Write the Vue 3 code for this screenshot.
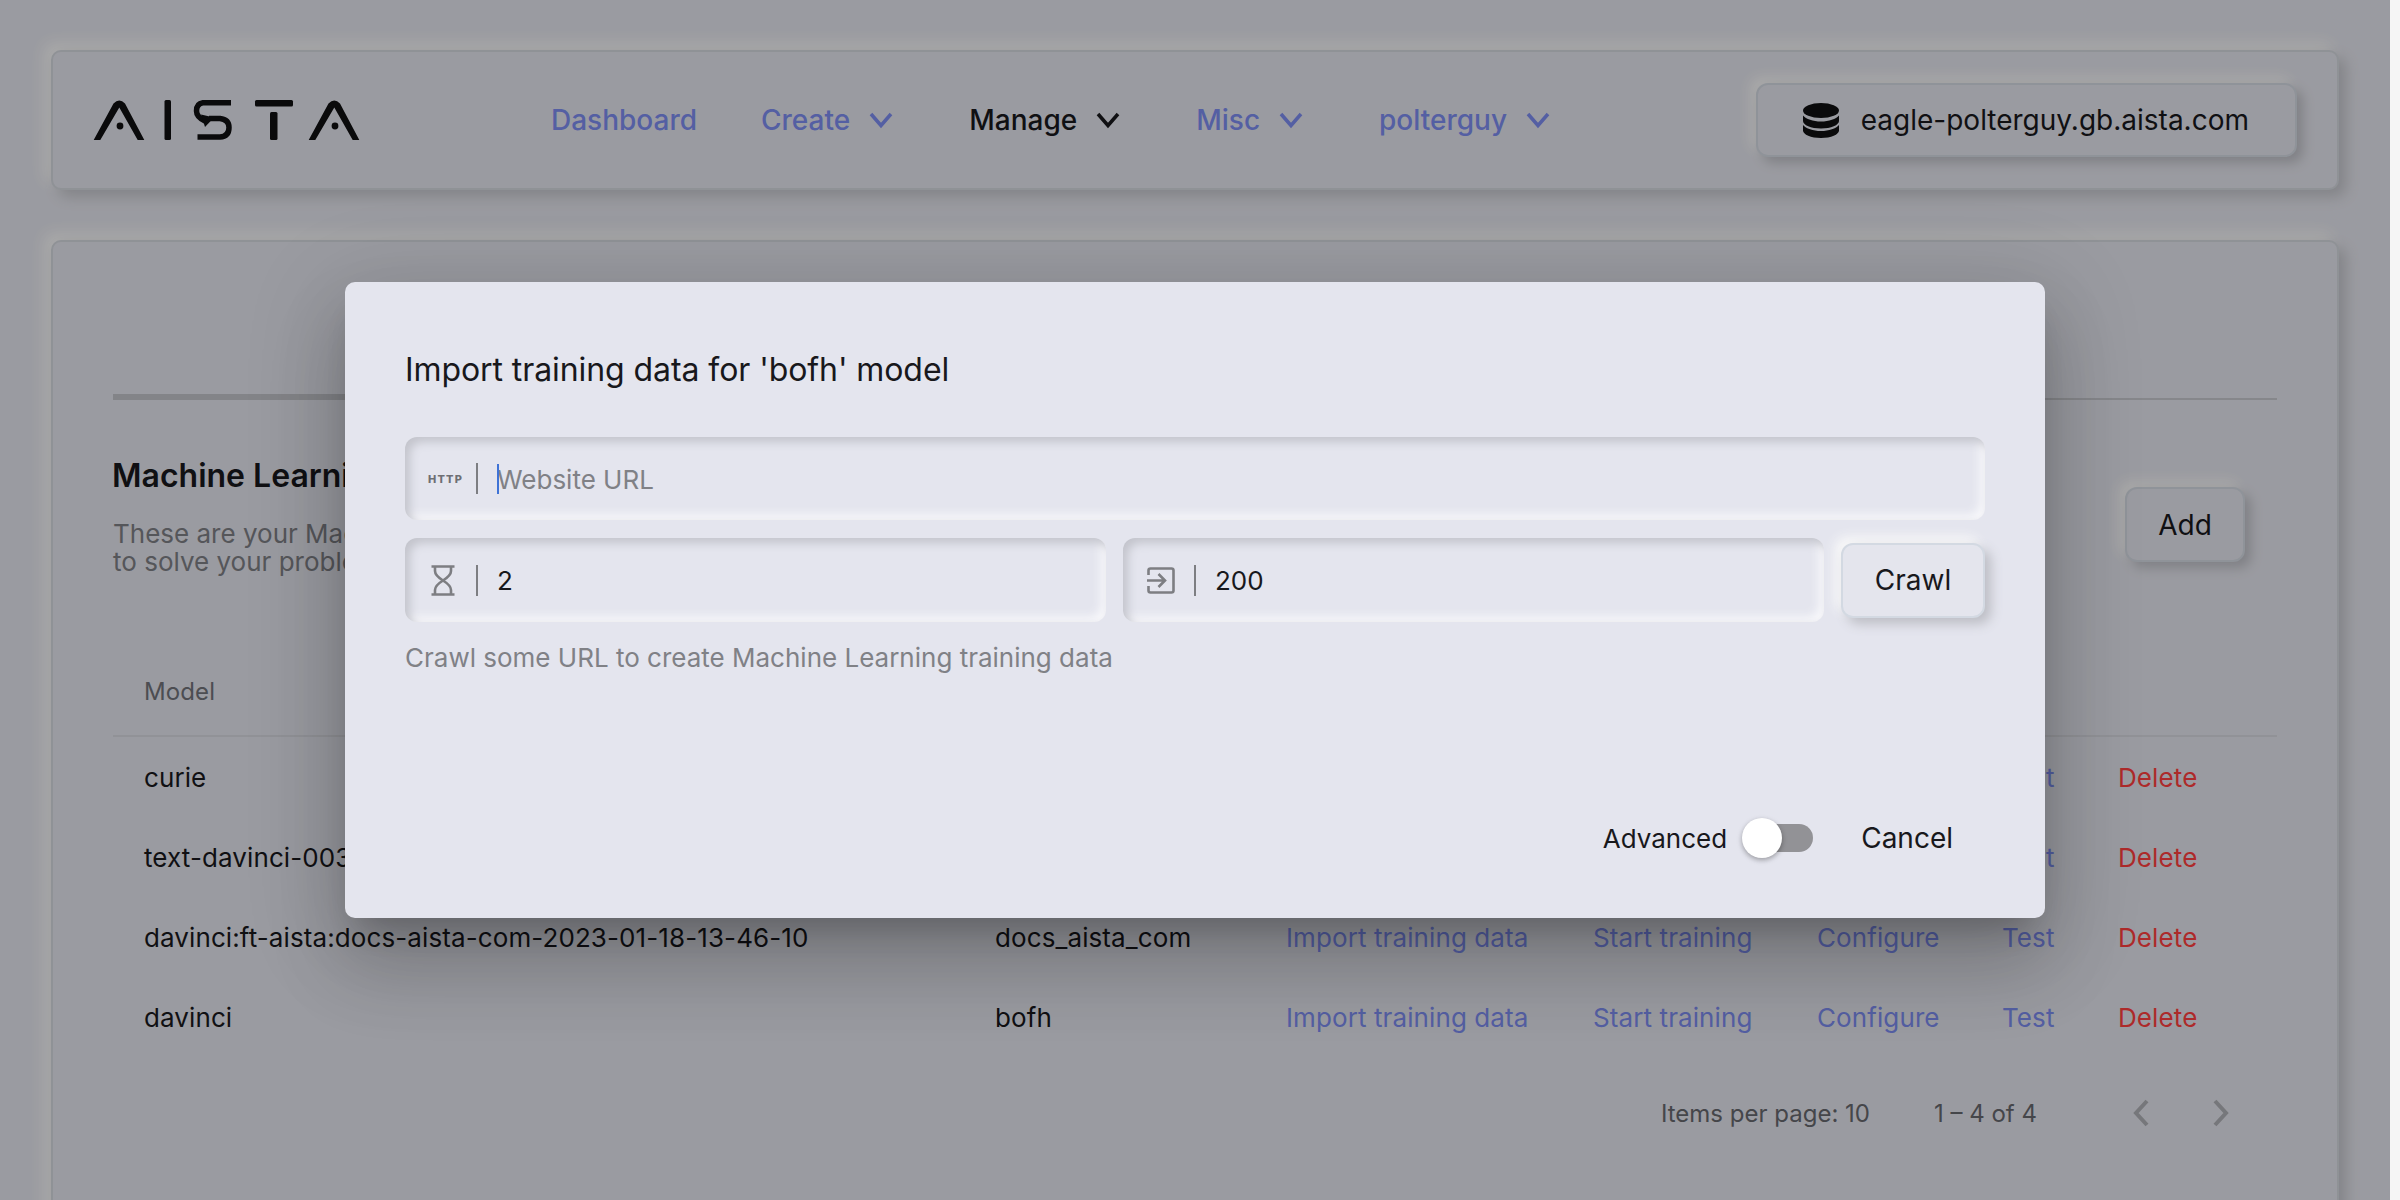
<template>
  <div class="root">
    <div class="page">
      <header class="card navbar">
        <!-- AISTA wordmark -->
        <svg class="logo" viewBox="0 0 267 40" role="img" aria-label="AISTA">
          <path d="M0.7 40 L20.5 3.5 Q26.3 -2.5 32 3.5 L51.3 40 H44.7 L26.3 7.5 L7.3 40 Z" />
          <circle cx="27" cy="26" r="3.4" />
          <rect x="71.5" y="0" width="6.5" height="40" rx="1.5" />
          <path class="logo-line" d="M138 2.7 H110 Q103.5 3.5 103.5 11 Q103.5 17 112 21" />
          <path d="M108 14.5 L121 17.5 L112 27 Z" />
          <path class="logo-line" d="M116 18.5 H127 Q136 19.5 136 27.5 Q136 36.5 127 37 H104.5" />
          <rect x="162" y="0" width="38" height="6.5" rx="1.5" />
          <rect x="177" y="12" width="7.5" height="28" rx="1.5" />
          <path d="M215.7 40 L235.5 3.5 Q241.3 -2.5 247 3.5 L266.3 40 H259.7 L241.3 7.5 L222.3 40 Z" />
          <circle cx="242" cy="26" r="3.4" />
        </svg>

        <nav class="nav">
          <a v-for="item in navItems" :key="item.label" class="nav-item" :class="{ active: item.active, drop: item.drop }">
            {{ item.label }}
            <svg v-if="item.drop" class="nav-chev" viewBox="0 0 32 32">
              <path d="M6 10 L16 21.5 L26 10" />
            </svg>
          </a>
        </nav>

        <button class="neu-btn server">
          <svg class="db-icon" viewBox="0 0 36 35">
            <ellipse cx="18" cy="7.5" rx="18" ry="7.5" />
            <path d="M0 12.5 v5.5 c0 4 8 7.5 18 7.5 s18 -3.5 18 -7.5 v-5.5 c-3 3.5 -10 6 -18 6 s-15 -2.500 -18 -6z" />
            <path d="M0 22 v5.500 c0 4 8 7.500 18 7.500 s18 -3.500 18 -7.500 V22 c-3 3.500 -10 6 -18 6 S3 25.500 0 22z" />
          </svg>
          eagle-polterguy.gb.aista.com
        </button>
      </header>

      <main class="card content">
        <div class="rule"><span class="rule-active"></span></div>

        <section class="section-head">
          <div>
            <h2 class="heading">Machine Learning models</h2>
            <p class="desc">These are your Machine Learning models, train them with your own data<br />to solve your problems</p>
          </div>
          <button class="neu-btn add">Add</button>
        </section>

        <div class="table">
          <div class="row head">
            <span>Model</span>
            <span>Name</span>
          </div>
          <div v-for="row in rows" :key="row.model" class="row">
            <span>{{ row.model }}</span>
            <span>{{ row.name }}</span>
            <a class="link">Import training data</a>
            <a class="link">Start training</a>
            <a class="link">Configure</a>
            <a class="link">Test</a>
            <a class="link danger">Delete</a>
          </div>
        </div>

        <div class="paginator">
          <span>Items per page: 10</span>
          <span class="range">1 – 4 of 4</span>
          <svg class="page-chev prev" viewBox="0 0 16 28"><path d="M14 2 L3 14 L14 26" /></svg>
          <svg class="page-chev" viewBox="0 0 16 28"><path d="M2 2 L13 14 L2 26" /></svg>
        </div>
      </main>
    </div>
    <div class="scrollbar"></div>

    <div class="overlay">
      <div class="modal">
        <h3 class="modal-title">Import training data for 'bofh' model</h3>

        <label class="field url-field">
          <span class="field-icon http">HTTP</span>
          <input placeholder="Website URL" />
        </label>

        <div class="field-row">
          <label class="field">
            <span class="field-icon">
              <svg class="hourglass" viewBox="0 0 24 31">
                <path d="M0.500 1.500 H23.500 M0.500 29.500 H23.500 M4 1.500 V6 Q4 10.500 12 15.500 Q20 10.500 20 6 V1.500 M4 29.500 V25 Q4 20.500 12 15.500 Q20 20.500 20 25 V29.500" />
              </svg>
            </span>
            <input value="2" />
          </label>
          <label class="field">
            <span class="field-icon">
              <svg class="enter" viewBox="0 0 28 27">
                <path d="M1.500 8 V3.500 Q1.500 1.500 3.500 1.500 H24.500 Q26.500 1.500 26.500 3.500 V23.500 Q26.500 25.500 24.500 25.500 H3.500 Q1.500 25.500 1.500 23.500 V19" />
                <path d="M0 13.500 H18 M11.500 7 L18 13.500 L11.500 20" />
              </svg>
            </span>
            <input value="200" />
          </label>
          <button class="neu-btn crawl">Crawl</button>
        </div>

        <p class="hint">Crawl some URL to create Machine Learning training data</p>

        <div class="modal-foot">
          <span class="adv-label">Advanced</span>
          <span class="toggle"><i class="thumb"></i></span>
          <button class="text-btn">Cancel</button>
        </div>
      </div>
    </div>
  </div>
</template>

<script setup>
const navItems = [
  { label: 'Dashboard' },
  { label: 'Create', drop: true },
  { label: 'Manage', drop: true, active: true },
  { label: 'Misc', drop: true },
  { label: 'polterguy', drop: true },
]

const rows = [
  { model: 'curie', name: 'sales_bot' },
  { model: 'text-davinci-003', name: 'support' },
  { model: 'davinci:ft-aista:docs-aista-com-2023-01-18-13-46-10', name: 'docs_aista_com' },
  { model: 'davinci', name: 'bofh' },
]
</script>

<style>
html, body { overflow: hidden; }
</style>

<style scoped>
.root {
  position: relative;
  display: flex;
  width: 2400px;
  height: 1200px;
  overflow: hidden;
  font-family: Inter, "Noto Sans", sans-serif;
  font-size: 28px;
  color: #18181c;
  background: #e4e5ed;
}
.page {
  width: 2390px;
  padding: 50px 51px 0;
  box-sizing: border-box;
}
.scrollbar {
  width: 10px;
  background: #f5f5f5;
}

/* neumorphic surfaces */
.card {
  box-sizing: border-box;
  border: 2px solid #d3d7de;
  border-radius: 10px;
  background: #e4e5ed;
  box-shadow: 7px 7px 14px #c2c3c9, -7px -7px 14px #f9f9f9;
}
.neu-btn {
  box-sizing: border-box;
  border: 2px solid #d3d9e2;
  border-radius: 12px;
  background: #e4e5ed;
  color: inherit;
  font: inherit;
  box-shadow: 6px 6px 12px #bdbec5, -6px -6px 12px #f9f9f9;
}

.navbar {
  display: flex;
  align-items: center;
  height: 140px;
  padding: 0 40px;
}
.logo {
  width: 267px;
  height: 40px;
  fill: #0f0f11;
  flex: none;
}
.logo-line {
  fill: none;
  stroke: #0f0f11;
  stroke-width: 5.5;
}
.nav {
  display: flex;
  align-items: center;
  gap: 64px;
  margin-left: 191px;
}
.nav-item {
  display: flex;
  align-items: center;
  color: #7c8cf0;
  font-weight: 500;
}
.nav-item.active { color: #18181c; }
.nav-item.drop { margin-right: 8px; }
.nav-chev {
  width: 32px;
  height: 32px;
  margin-left: 15px;
  fill: none;
  stroke: currentColor;
  stroke-width: 3.5;
}
.server {
  display: flex;
  align-items: center;
  gap: 22px;
  height: 74px;
  margin-left: auto;
  padding: 0 46px 0 45px;
}
.db-icon {
  width: 36px;
  height: 35px;
  fill: #0f0f11;
}

.content {
  height: 1100px;
  margin-top: 50px;
  padding: 152px 60px 0;
}
.rule {
  position: relative;
  height: 6px;
  border-bottom: 2px solid #c6c7cd;
  box-sizing: border-box;
}
.rule-active {
  position: absolute;
  left: 0;
  top: 0;
  width: 700px;
  height: 6px;
  background: #c2c3c9;
}
.section-head {
  display: flex;
  justify-content: space-between;
  align-items: flex-start;
  padding-top: 49px;
}
.heading {
  margin: 0;
  margin-left: -1px;
  font-size: 32px;
  font-weight: 600;
  line-height: 54px;
}
.desc {
  margin: 17px 0 0;
  font-size: 26px;
  line-height: 28px;
  color: #7e7f85;
}
.add {
  width: 120px;
  height: 75px;
  margin: 38px 32px 0 0;
}

.table { margin-top: 81px; }
.row {
  display: grid;
  grid-template-columns: 851px 291px 307px 224px 185px 116px 1fr;
  align-items: center;
  height: 80px;
  padding-left: 31px;
  box-sizing: border-box;
  font-size: 26px;
  letter-spacing: 0.1px;
}
.row.head {
  padding-bottom: 10px;
  border-bottom: 2px solid #d6d7df;
  font-size: 24px;
  color: #717279;
}
.link { color: #7c8cf0; }
.link.danger { color: #ff3f3f; }

.paginator {
  display: flex;
  align-items: center;
  justify-content: flex-end;
  height: 112px;
  padding-right: 48px;
  font-size: 24px;
  color: #66676d;
}
.range { margin-left: 64px; }
.page-chev {
  width: 16px;
  height: 28px;
  margin-left: 64px;
  fill: none;
  stroke: #aeb0b6;
  stroke-width: 4;
}
.page-chev.prev { margin-left: 96px; }

/* dialog */
.overlay {
  position: absolute;
  inset: 0 10px 0 0;
  display: flex;
  align-items: center;
  justify-content: center;
  background: rgba(0, 0, 0, 0.32);
}
.modal {
  display: flex;
  flex-direction: column;
  box-sizing: border-box;
  width: 1700px;
  height: 636px;
  padding: 60px 60px 44px;
  border-radius: 10px;
  background: #e4e5ee;
  box-shadow: 0 22px 30px -14px rgba(0, 0, 0, 0.2), 0 48px 76px 6px rgba(0, 0, 0, 0.14), 0 18px 92px 16px rgba(0, 0, 0, 0.12);
}
.modal-title {
  margin: 0 0 39px;
  font-size: 32px;
  font-weight: 400;
  line-height: 56px;
  letter-spacing: -0.08px;
}
.field {
  position: relative;
  display: flex;
  align-items: center;
  flex: 1 1 0;
  min-width: 0;
  box-sizing: border-box;
  border-radius: 12px;
  font-size: 26px;
  box-shadow: inset 5px 5px 10px #c3c4cc, inset -5px -5px 10px #f8f8fb;
}
.url-field {
  flex: none;
  height: 83px;
}
.url-field input { padding-top: 2px; }
.field-row .field { height: 84px; }
.field-icon {
  position: relative;
  display: flex;
  align-items: center;
  justify-content: center;
  flex: none;
  box-sizing: border-box;
  width: 73px;
  height: 31px;
  padding-left: 3px;
  margin-right: 19px;
  color: #6e6f74;
}
.field-icon::after {
  content: '';
  position: absolute;
  right: 0;
  top: 0;
  width: 2px;
  height: 31px;
  background: #7d7e82;
}
.field-icon.http {
  padding-left: 8px;
  font-size: 11px;
  font-weight: 800;
  letter-spacing: 1.2px;
}
.url-field::after {
  content: '';
  position: absolute;
  left: 92px;
  top: 27px;
  width: 2px;
  height: 30px;
  background: #3f73d6;
}
.field input {
  flex: 1;
  min-width: 0;
  border: none;
  outline: none;
  background: none;
  color: #18181c;
  font: inherit;
}
.field input { padding-left: 0; padding-right: 0; padding-bottom: 0; }
.field input::placeholder { color: #808186; }
.hourglass, .enter {
  fill: none;
  stroke: #7d7e82;
}
.hourglass {
  width: 24px;
  height: 31px;
  stroke-width: 2.6;
}
.enter {
  width: 28px;
  height: 27px;
  stroke-width: 2.6;
}
.field-row {
  display: flex;
  align-items: center;
  gap: 17px;
  margin-top: 18px;
}
.crawl {
  flex: none;
  width: 144px;
  height: 75px;
}
.hint {
  margin: 19px 0 0;
  font-size: 26px;
  line-height: 34px;
  color: #808186;
}
.modal-foot {
  display: flex;
  align-items: center;
  justify-content: flex-end;
  height: 72px;
  margin-top: auto;
}
.adv-label { font-size: 26px; }
.toggle {
  position: relative;
  display: block;
  width: 68px;
  height: 28px;
  margin-left: 18px;
  border-radius: 14px;
  background: #929296;
}
.thumb {
  position: absolute;
  left: -3px;
  top: -6px;
  width: 40px;
  height: 40px;
  border-radius: 50%;
  background: #fff;
  box-shadow: 0 2px 4px rgba(0, 0, 0, 0.2), 0 2px 6px rgba(0, 0, 0, 0.14);
}
.text-btn {
  margin-left: 16px;
  padding: 0 32px;
  border: none;
  background: none;
  color: inherit;
  font: inherit;
}
</style>
